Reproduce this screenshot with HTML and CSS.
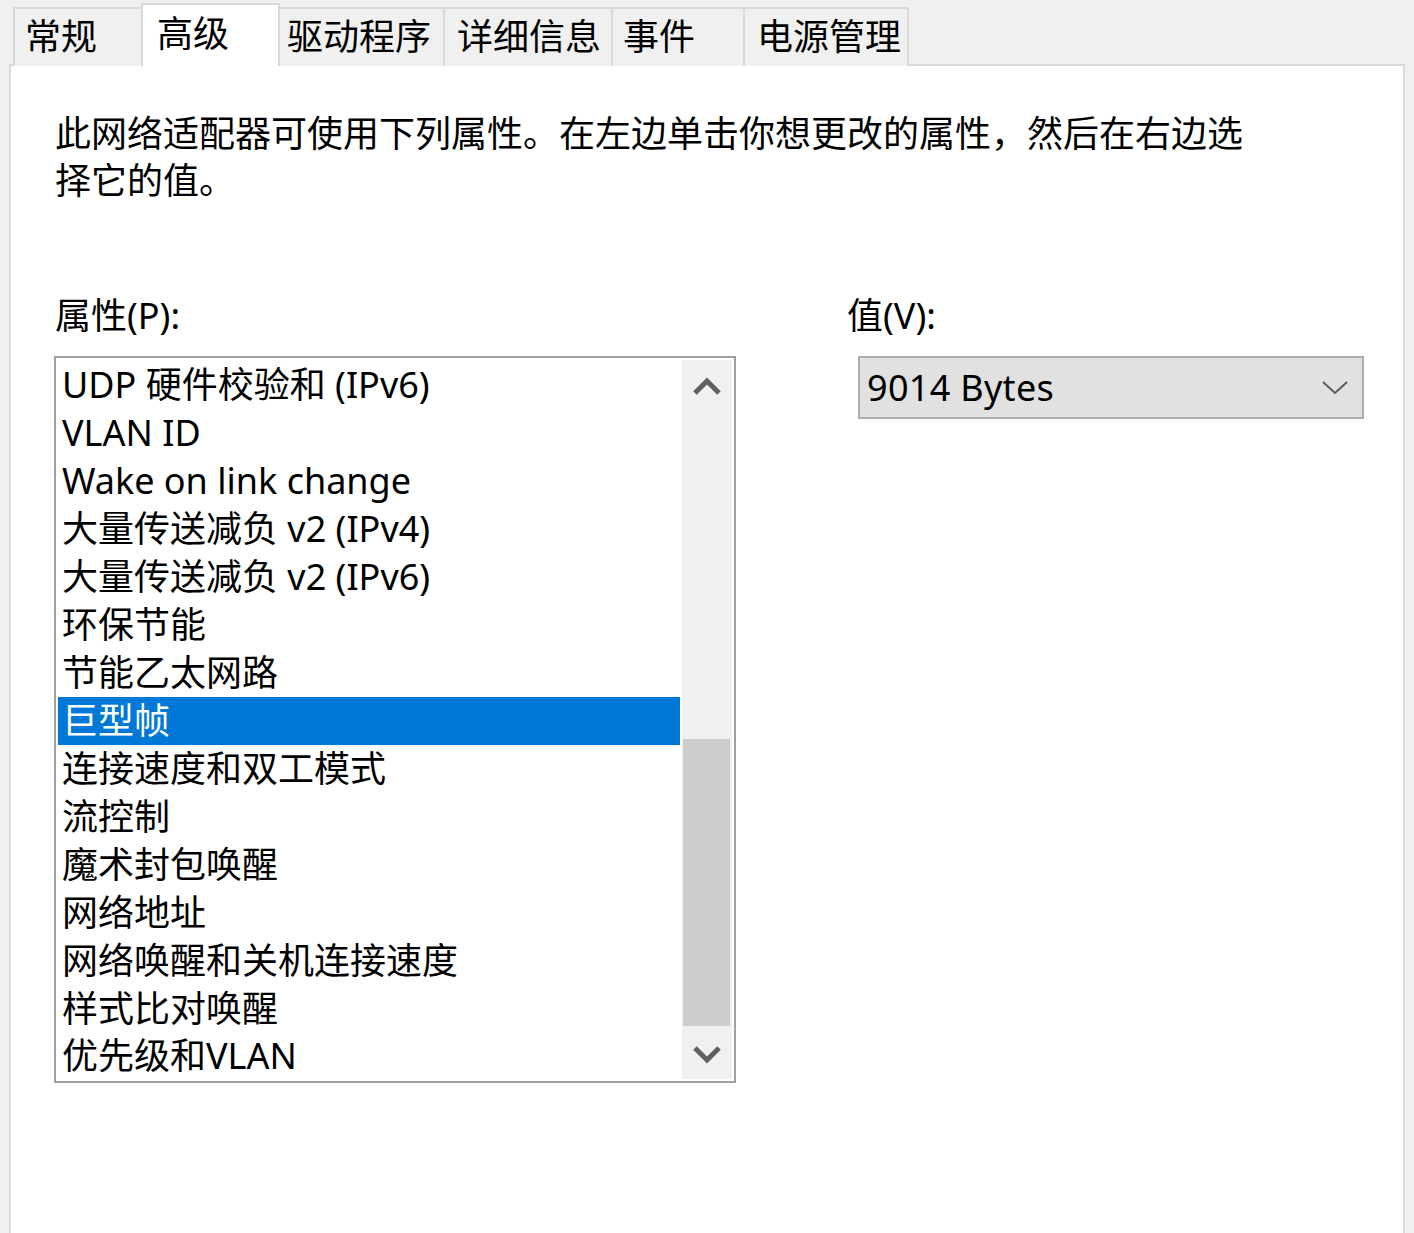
FILE: index.html
```html
<!DOCTYPE html>
<html lang="zh-CN">
<head>
<meta charset="utf-8">
<title>高级</title>
<link rel="stylesheet" href="styles.css">
</head>
<body>
<div class="tabs">
  <div class="tab tab-general">常规</div>
  <div class="tab tab-advanced active">高级</div>
  <div class="tab tab-driver">驱动程序</div>
  <div class="tab tab-details">详细信息</div>
  <div class="tab tab-events">事件</div>
  <div class="tab tab-power">电源管理</div>
</div>
<div class="panel">
  <p class="desc">此网络适配器可使用下列属性。在左边单击你想更改的属性，然后在右边选择它的值。</p>
  <div class="fields">
    <div class="col-prop">
      <div class="label">属性(P):</div>
      <div class="listbox">
        <ul class="items">
          <li>UDP 硬件校验和 (IPv6)</li>
          <li>VLAN ID</li>
          <li>Wake on link change</li>
          <li>大量传送减负 v2 (IPv4)</li>
          <li>大量传送减负 v2 (IPv6)</li>
          <li>环保节能</li>
          <li>节能乙太网路</li>
          <li class="selected">巨型帧</li>
          <li>连接速度和双工模式</li>
          <li>流控制</li>
          <li>魔术封包唤醒</li>
          <li>网络地址</li>
          <li>网络唤醒和关机连接速度</li>
          <li>样式比对唤醒</li>
          <li>优先级和VLAN</li>
        </ul>
        <div class="scrollbar">
          <div class="sb-btn sb-up">
            <svg width="28" height="20" viewBox="0 0 28 20"><polyline points="2,16 14,4 26,16" fill="none" stroke="#606060" stroke-width="5"/></svg>
          </div>
          <div class="sb-track"><div class="sb-thumb"></div></div>
          <div class="sb-btn sb-down">
            <svg width="28" height="20" viewBox="0 0 28 20"><polyline points="2,4 14,16 26,4" fill="none" stroke="#606060" stroke-width="5"/></svg>
          </div>
        </div>
      </div>
    </div>
    <div class="col-value">
      <div class="label">值(V):</div>
      <div class="combo">
        <span class="combo-text">9014 Bytes</span>
        <svg class="combo-arrow" width="26" height="14" viewBox="0 0 26 14"><polyline points="1,1 13,12 25,1" fill="none" stroke="#5a5a5a" stroke-width="2"/></svg>
      </div>
    </div>
  </div>
</div>
</body>
</html>
```

FILE: styles.css
```css
html, body {
  margin: 0;
  padding: 0;
}
body {
  background: #f0f0f0;
  font-family: "Noto Sans", "Noto Sans CJK SC", sans-serif;
  font-size: 36px;
  color: #000;
  height: 1233px;
  overflow: hidden;
}

/* ---------- tabs ---------- */
.tabs {
  display: flex;
  align-items: flex-end;
  height: 66px;
  padding-left: 13px;
  box-sizing: border-box;
}
.tab {
  box-sizing: border-box;
  height: 59px;
  border: 2px solid #d9d9d9;
  border-bottom: none;
  background: #f0f0f0;
  line-height: 36px;
  padding-top: 10px;
  padding-left: 12px;
  white-space: nowrap;
  margin-left: -2px;
}
.tab-general { margin-left: 0; width: 130px; padding-left: 10px; }
.tab-advanced { width: 139px; padding-left: 14px; }
.tab-driver { width: 167px; padding-left: 7px; }
.tab-details { width: 170px; padding-left: 12px; }
.tab-events { width: 134px; padding-left: 10px; }
.tab-power { width: 166px; padding-left: 12px; }
.tab.active {
  position: relative;
  z-index: 1;
  height: 63px;
  background: #fff;
  padding-top: 11px;
}

/* ---------- panel ---------- */
.panel {
  margin: -2px 9px 0 9px;
  height: 1180px;
  box-sizing: border-box;
  border: 2px solid #dadada;
  border-bottom: none;
  background: #fff;
  padding: 44px 0 0 43px;
}
.desc {
  margin: 0 0 0 1px;
  width: 1205px;
  line-height: 47px;
}

.fields {
  display: grid;
  grid-template-columns: 682px 518px;
  column-gap: 110px;
  margin-top: 88px;
}
.label {
  line-height: 47px;
  margin-left: 1px;
  margin-bottom: 17px;
}

/* ---------- listbox ---------- */
.listbox {
  box-sizing: border-box;
  width: 682px;
  height: 727px;
  border: 2px solid #a0a0a0;
  padding: 2px;
  display: flex;
  gap: 2px;
  background: #fff;
}
.items {
  flex: 1;
  list-style: none;
  margin: 0;
  padding: 1px 0 0 0;
}
.items li {
  height: 48px;
  line-height: 48px;
  padding-left: 4px;
  white-space: nowrap;
}
.items li:last-child {
  height: 46px;
  line-height: 46px;
}
.items li.selected {
  background: #0078d7;
  color: #fff;
}

.scrollbar {
  width: 50px;
  background: #f0f0f0;
  display: flex;
  flex-direction: column;
}
.sb-btn {
  height: 54px;
  display: flex;
  align-items: center;
  justify-content: center;
}
.sb-down {
  height: 53px;
  padding-top: 2px;
  box-sizing: border-box;
}
.sb-track {
  flex: 1;
  display: flex;
  flex-direction: column;
  justify-content: flex-end;
}
.sb-thumb {
  height: 287px;
  margin: 0 2px 0 1px;
  background: #cdcdcd;
}

/* ---------- combo ---------- */
.combo {
  box-sizing: border-box;
  margin-left: 12px;
  width: 506px;
  height: 63px;
  border: 2px solid #adadad;
  background: #e1e1e1;
  display: flex;
  align-items: center;
  justify-content: space-between;
  padding: 0 14px 0 7px;
}
.combo-text {
  line-height: 48px;
  letter-spacing: 0.3px;
}
```
